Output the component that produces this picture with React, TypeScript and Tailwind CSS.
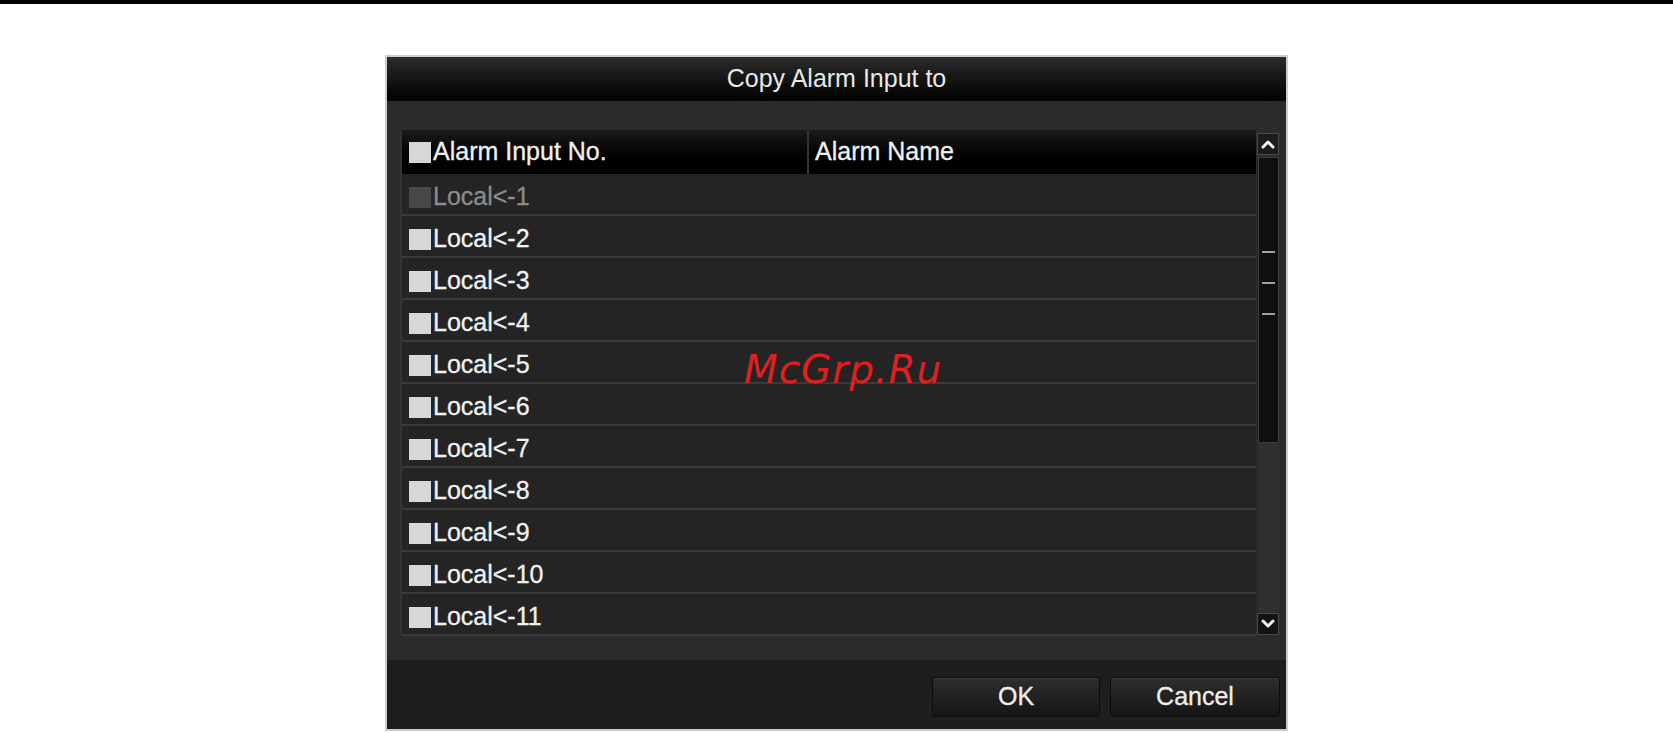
import React from 'react';

const rows = Array.from({ length: 11 }, (_, i) => `Local<-${i + 1}`);

const Chevron = ({ up }: { up?: boolean }) => (
  <svg width="14" height="10" viewBox="0 0 14 10" className="block">
    <polyline
      points={up ? '2,8 7,3 12,8' : '2,2 7,7 12,2'}
      fill="none"
      stroke="#f2f2f2"
      strokeWidth="3"
      strokeLinecap="round"
      strokeLinejoin="round"
    />
  </svg>
);

const Checkbox = ({ disabled }: { disabled?: boolean }) => (
  <span
    className={`block w-[22px] h-[21px] shrink-0 ${disabled ? 'bg-[#474747]' : 'bg-[#d7d7d7]'}`}
  />
);

const DialogButton = ({ label, width }: { label: string; width: string }) => (
  <button
    className={`${width} h-[40px] rounded-[3px] border border-[#0c0c0c] bg-gradient-to-b from-[#2e2e2e] to-[#151515] text-[25px] text-[#eeeeee] [-webkit-text-stroke-width:0.3px] shadow-[inset_0_1px_0_#3a3a3a]`}
  >
    {label}
  </button>
);

export default function App() {
  return (
    <div
      className="relative w-[1673px] h-[733px] bg-white border-t-4 border-black overflow-hidden"
      style={{ fontFamily: '"Liberation Sans", Arial, sans-serif' }}
    >
      <div className="ml-[385px] mt-[51px] w-[903px] h-[676px] border-2 border-[#cdcdcd] flex flex-col bg-[#2b2b2b]">
        {/* Title bar */}
        <div className="h-[44px] shrink-0 flex items-center justify-center bg-gradient-to-b from-[#2d2d2d] via-[#151515] to-[#030303] text-[25px] text-[#e8e8e8]">
          Copy Alarm Input to
        </div>

        {/* Body */}
        <div className="flex-1 pt-[29px] pl-[13px] pr-[7px] bg-[#2b2b2b]">
          <div className="flex">
            {/* Table */}
            <div className="w-[857px] border-l-2 border-[#333333]">
              <div className="h-[44px] flex bg-gradient-to-b from-[#1c1c1c] via-[#050505] to-[#000000] text-[25px] text-[#f0f0f0] [-webkit-text-stroke-width:0.3px]">
                <div className="w-[407px] flex items-center gap-[2px] pl-[7px] border-r-2 border-[#353535]">
                  <Checkbox />
                  <span>Alarm Input No.</span>
                </div>
                <div className="flex-1 flex items-center pl-[6px]">Alarm Name</div>
              </div>
              {rows.map((label, i) => (
                <div
                  key={label}
                  className="h-[42px] flex items-center gap-[2px] pl-[7px] pt-[6px] bg-[#242424] border-b-2 border-[#3a3a3a] text-[25px] [-webkit-text-stroke-width:0.3px]"
                >
                  <Checkbox disabled={i === 0} />
                  <span className={i === 0 ? 'text-[#8c8c8c]' : 'text-[#f0f0f0]'}>{label}</span>
                </div>
              ))}
            </div>

            {/* Scrollbar */}
            <div className="w-[22px] ml-[1px] flex flex-col pt-[3px] pb-[1px]">
              <div className="h-[22px] flex items-center justify-center bg-[#1b1b1b] border border-[#4a4a4a]">
                <Chevron up />
              </div>
              <div className="flex-1 mt-[2px] mb-[1px] flex flex-col bg-[#2f2f2f] border-l border-[#262626]">
                <div className="h-[286px] bg-[#0f0f0f] border border-[#3c3c3c] flex flex-col items-center pt-[93px] gap-[29px]">
                  <span className="block w-[13px] h-[2px] bg-[#a0a0a0]" />
                  <span className="block w-[13px] h-[2px] bg-[#a0a0a0]" />
                  <span className="block w-[13px] h-[2px] bg-[#a0a0a0]" />
                </div>
              </div>
              <div className="h-[22px] flex items-center justify-center bg-[#141414] border border-[#4a4a4a]">
                <Chevron />
              </div>
            </div>
          </div>
        </div>

        {/* Footer */}
        <div className="h-[69px] shrink-0 flex justify-end items-start gap-[10px] pt-[16px] pr-[6px] bg-[#1e1e1e] border-t border-[#222222]">
          <DialogButton label="OK" width="w-[168px]" />
          <DialogButton label="Cancel" width="w-[170px]" />
        </div>
      </div>

      {/* Watermark */}
      <div
        className="absolute left-[744px] top-[337px] text-[39px] italic tracking-[1px] text-[#e01f1f] pointer-events-none"
        style={{ fontFamily: '"DejaVu Sans", sans-serif' }}
      >
        McGrp.Ru
      </div>
    </div>
  );
}
